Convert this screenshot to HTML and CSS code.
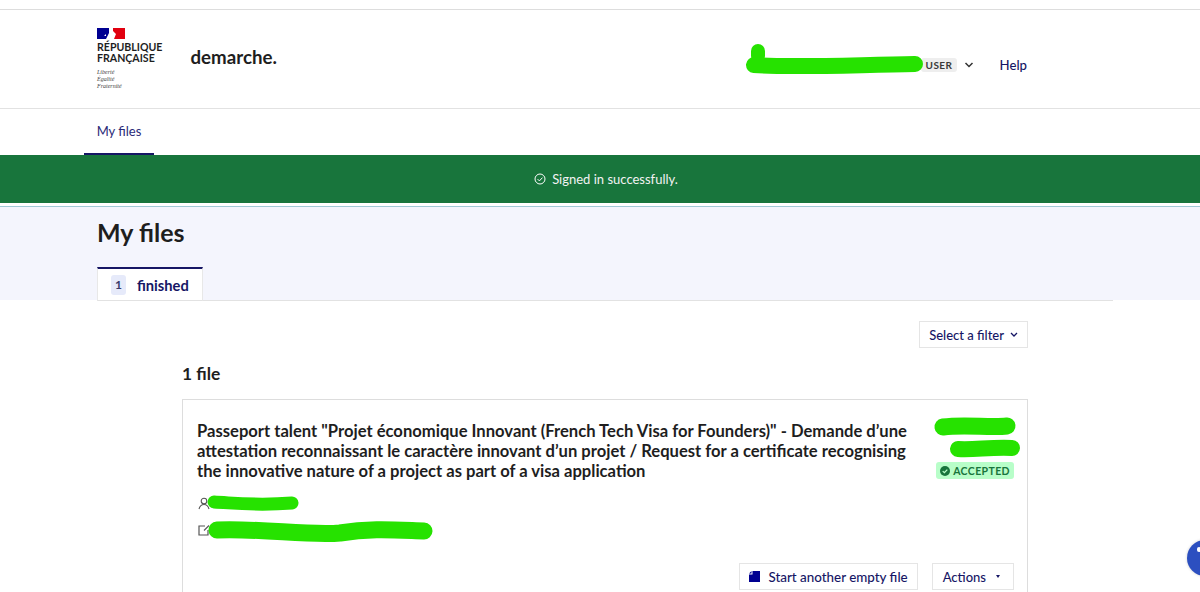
FILE: index.html
```html
<!DOCTYPE html>
<html lang="en">

<head>
    <meta charset="UTF-8">
    <meta name="viewport" content="width=device-width, initial-scale=1.0">
    <title>My files - demarche.</title>
    <link rel="stylesheet" href="styles.css">
</head>

<body>
    <div class="top-strip"></div>

    <header class="site-header">
        <div class="brand">
            <div class="marianne">
                <svg class="flag" width="28" height="11" viewBox="0 0 28 11">
                    <rect x="0" y="0" width="12" height="11" fill="#000091"/>
                    <path d="M9 11 L12 5 L12 11 Z M7 8 L9 6 L9 8 Z" fill="#fff"/>
                    <path d="M16 0 H28 V11 H17 L19 6 L16 3 Z" fill="#e1000f"/>
                </svg>
                <div class="republique">RÉPUBLIQUE<br>FRANÇAISE</div>
                <div class="devise">Liberté<br>Égalité<br>Fraternité</div>
            </div>
            <div class="service-name">demarche.</div>
        </div>
        <div class="user-links">
            <span class="user-badge">USER</span>
            <svg class="chevron" width="10" height="6" viewBox="0 0 10 6"><path d="M1.5 1 L5 4.5 L8.5 1" fill="none" stroke="#333" stroke-width="1.5"/></svg>
            <a href="#" class="help-link">Help</a>
        </div>
    </header>

    <nav class="main-nav">
        <a href="#" class="nav-item">My files</a>
    </nav>

    <div class="flash">
        <svg width="12" height="12" viewBox="0 0 12 12"><circle cx="6" cy="6" r="5" fill="none" stroke="#fff" stroke-width="1"/><path d="M3.6 6.1 L5.4 7.9 L8.5 4.6" fill="none" stroke="#fff" stroke-width="1"/></svg>
        <span>Signed in successfully.</span>
    </div>

    <section class="hero">
        <h1>My files</h1>
        <div class="tabs">
            <a href="#" class="tab"><span class="tab-count">1</span>finished</a>
        </div>
    </section>

    <main class="content">
        <div class="filter-row">
            <button class="btn">Select a filter
                <svg width="8" height="5" viewBox="0 0 8 5"><path d="M1 1 L4 4 L7 1" fill="none" stroke="#161665" stroke-width="1.3"/></svg>
            </button>
        </div>
        <h2 class="file-count">1 file</h2>
        <article class="file-card">
            <div class="card-top">
                <h3>Passeport talent "Projet économique Innovant (French Tech Visa for Founders)" - Demande d’une attestation reconnaissant le caractère innovant d’un projet / Request for a certificate recognising the innovative nature of a project as part of a visa application</h3>
                <div class="card-status">
                    <span class="status-badge">
                        <svg width="10" height="10" viewBox="0 0 10 10"><circle cx="5" cy="5" r="5" fill="#18753c"/><path d="M2.7 5.1 L4.4 6.7 L7.3 3.6" fill="none" stroke="#b8fec9" stroke-width="1.3"/></svg>
                        ACCEPTED
                    </span>
                </div>
            </div>
            <div class="meta-row">
                <svg width="12" height="13" viewBox="0 0 12 13"><circle cx="6" cy="4" r="2.8" fill="none" stroke="#555" stroke-width="1.1"/><path d="M1 12 C2 8.5 4 7.5 6 7.5 C8 7.5 10 8.5 11 12" fill="none" stroke="#555" stroke-width="1.1"/></svg>
            </div>
            <div class="meta-row meta-row-second">
                <svg width="12" height="12" viewBox="0 0 12 12"><path d="M7 2 H1 V11 H10 V6" fill="none" stroke="#555" stroke-width="1.2"/><path d="M6 6.5 L11 1.5" fill="none" stroke="#555" stroke-width="1.1"/></svg>
            </div>
            <div class="card-actions">
                <button class="btn btn-start">
                    <svg width="11" height="11" viewBox="0 0 11 11"><path d="M3.5 0 H11 V11 H0 V3.5 H3.5 Z M0 2.5 L2.5 0 V2.5 Z" fill="#000091"/></svg>
                    Start another empty file
                </button>
                <button class="btn btn-actions">Actions <span class="caret"></span></button>
            </div>
        </article>
    </main>

    <div class="chat-bubble"></div>

    <!-- traits de masquage par-dessus les donnees personnelles -->
    <svg class="scribbles" width="1200" height="592" viewBox="0 0 1200 592">
        <g fill="none" stroke="#26e200" stroke-linecap="round" stroke-linejoin="round">
            <path d="M758 51 L758 56" stroke-width="14"/>
            <path d="M754 65 C790 68 850 65 915 64" stroke-width="16"/>
            <path d="M943 427 C965 424 990 428 1007 426" stroke-width="17"/>
            <path d="M958 449 C975 450 990 447 1012 448" stroke-width="16"/>
            <path d="M214 502 C235 503 255 506 292 503" stroke-width="13"/>
            <path d="M217 530 C260 528 310 536 340 533 C370 528 395 530 424 531" stroke-width="17"/>
        </g>
    </svg>
</body>
</html>
```

FILE: styles.css
```css
body {
    font-family: "Lato", "Noto Sans", sans-serif;
    margin: 0;
    background-color: #fff;
    color: #161616;
    height: 592px;
    overflow: hidden;
    position: relative;
}

a {
    text-decoration: none;
}

.top-strip {
    height: 9px;
    border-bottom: 1px solid #ddd;
}

.site-header {
    height: 98px;
    border-bottom: 1px solid #e2e2e2;
    padding: 0 173px 0 97px;
    display: flex;
    justify-content: space-between;
    align-items: center;
}

.brand {
    display: flex;
    align-items: center;
    gap: 28px;
}

.flag {
    display: block;
    margin-bottom: 3px;
}

.republique {
    font-size: 10.6px;
    line-height: 11px;
    font-weight: 700;
    color: #1e1e1e;
}

.devise {
    margin-top: 5px;
    font-family: "Liberation Serif", serif;
    font-style: italic;
    font-size: 6px;
    line-height: 6.7px;
    color: #444;
}

.service-name {
    font-size: 18.7px;
    font-weight: 700;
    color: #1e1e1e;
    margin-bottom: 3px;
}

.user-links {
    display: flex;
    align-items: center;
    padding-top: 12px;
}

.user-badge {
    background-color: #eee;
    color: #3a3a3a;
    font-size: 10px;
    font-weight: 700;
    letter-spacing: 0.5px;
    padding: 1px 4px;
    border-radius: 3px;
}

.chevron {
    margin-left: 7px;
}

.help-link {
    margin-left: 26px;
    color: #161665;
    font-size: 13.2px;
    font-weight: 500;
}

.main-nav {
    height: 46px;
    padding-left: 84px;
    display: flex;
}

.nav-item {
    width: 70px;
    box-sizing: border-box;
    padding-top: 14px;
    text-align: center;
    color: #2a2a78;
    font-size: 13px;
    border-bottom: 2px solid #161665;
}

.flash {
    height: 48px;
    background-color: #18753c;
    color: #f2f2f2;
    font-size: 13px;
    padding-left: 12px;
    display: flex;
    justify-content: center;
    align-items: center;
    gap: 6px;
}

.hero {
    margin-top: 3px;
    border-top: 1px solid #9fc9d6;
    height: 94px;
    box-sizing: border-box;
    background-color: #f4f5fd;
    padding-left: 97px;
}

.hero h1 {
    margin: 0;
    padding-top: 9px;
    font-size: 25px;
    line-height: 32px;
    font-weight: 700;
    color: #1e1e1e;
}

.tabs {
    margin-top: 19px;
    display: flex;
    margin-right: 87px;
    border-bottom: 1px solid #e2e2e2;
    position: relative;
}

.tab {
    width: 106px;
    height: 34px;
    box-sizing: border-box;
    margin-bottom: -1px;
    background-color: #fff;
    border-top: 2px solid #161665;
    border-left: 1px solid #e8e8e8;
    border-right: 1px solid #e8e8e8;
    border-bottom: 1px solid #e2e2e2;
    color: #161665;
    font-size: 14.7px;
    font-weight: 700;
    display: flex;
    align-items: center;
    padding-left: 13px;
}

.tab-count {
    background-color: #e6eafa;
    color: #3a3a6a;
    font-size: 12px;
    width: 15px;
    height: 20px;
    line-height: 20px;
    text-align: center;
    border-radius: 3px;
    margin-right: 11px;
}

.content {
    padding: 21px 172px 0 182px;
}

.filter-row {
    display: flex;
    justify-content: flex-end;
}

.btn {
    font-family: inherit;
    font-size: 13px;
    font-weight: 500;
    color: #161665;
    background-color: #fff;
    border: 1px solid #e5e5e5;
    height: 27px;
    padding: 0 9px;
    display: flex;
    align-items: center;
    gap: 6px;
}

.file-count {
    margin: 15px 0 14px;
    font-size: 17.4px;
    line-height: 22px;
    font-weight: 700;
    color: #1e1e1e;
}

.file-card {
    border: 1px solid #ddd;
    border-bottom: 0;
    height: 193px;
    box-sizing: border-box;
    padding: 21px 13px 0 14px;
}

.card-top {
    display: flex;
    justify-content: space-between;
}

.card-top h3 {
    margin: 0;
    width: 725px;
    font-size: 16.6px;
    line-height: 20px;
    font-weight: 700;
    color: #1e1e1e;
}

.card-status {
    padding-top: 41px;
}

.status-badge {
    background-color: #b8fec9;
    color: #18753c;
    font-size: 10.5px;
    font-weight: 700;
    letter-spacing: 0.4px;
    border-radius: 3px;
    height: 17px;
    padding: 0 4px;
    display: flex;
    align-items: center;
    gap: 3px;
}

.meta-row {
    margin-top: 16px;
    height: 13px;
}

.meta-row svg {
    display: block;
    margin-left: 1px;
}

.meta-row-second {
    margin-top: 14px;
}

.card-actions {
    margin-top: 26px;
    display: flex;
    justify-content: flex-end;
    gap: 14px;
}

.btn-start {
    font-size: 13.4px;
    gap: 8px;
}

.btn-actions {
    padding: 0 13px 0 10px;
    gap: 10px;
}

.caret {
    border-left: 2.5px solid transparent;
    border-right: 2.5px solid transparent;
    border-top: 3.5px solid #161665;
}

.chat-bubble {
    position: absolute;
    left: 1187px;
    top: 540px;
    width: 36px;
    height: 36px;
    border-radius: 50%;
    background-color: #2c4fc0;
    box-shadow: 0 0 3px rgba(0, 0, 0, 0.2);
}

.chat-bubble::after {
    content: "";
    position: absolute;
    left: 10px;
    top: 7px;
    width: 4px;
    height: 5px;
    border-radius: 2px;
    background-color: #fff;
}

.scribbles {
    position: absolute;
    left: 0;
    top: 0;
    pointer-events: none;
}
```
